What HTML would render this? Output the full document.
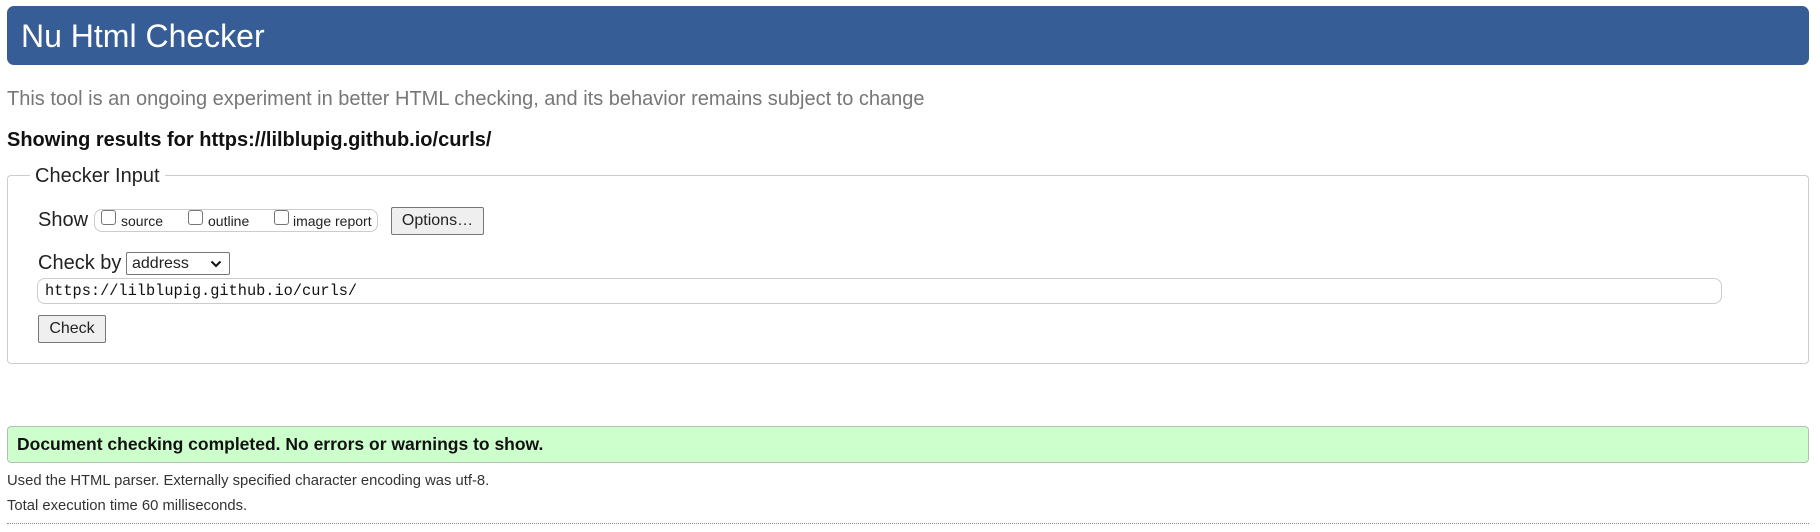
<!DOCTYPE html>
<html><head><meta charset="utf-8"><style>
*{box-sizing:border-box}
body{margin:0;width:1820px;height:532px;background:#fff;font-family:"Liberation Sans",Arial,sans-serif;color:#222;position:relative;overflow:hidden}
.a{position:absolute;white-space:nowrap}
#hd{left:7px;top:6px;width:1802px;height:59px;background:#365d95;border-radius:7px}
#hd span{position:absolute;left:14px;top:12px;font-size:32px;color:#fff;line-height:36px}
.fs{left:7px;top:175px;width:1802px;height:189px;border:1px solid #ccc;border-radius:4px}
.cb{display:inline-block;width:15px;height:15px;border:1px solid #767676;border-radius:3px;background:#fff}
.btn{background:#efefef;border:1px solid #767676;border-radius:2px;font-size:16px;text-align:center}
</style></head><body>
<div id="hd" class="a"><span>Nu Html Checker</span></div>
<div class="a" style="left:7px;top:87px;font-size:20px;color:#777;line-height:24px">This tool is an ongoing experiment in better HTML checking, and its behavior remains subject to change</div>
<div class="a" style="left:7px;top:128px;font-size:20px;font-weight:bold;color:#111;line-height:24px">Showing results for https://lilblupig.github.io/curls/</div>
<div class="a fs"></div>
<div class="a" style="left:30px;top:164px;background:#fff;padding:0 5px;font-size:20px;line-height:24px;color:#222">Checker Input</div>
<div class="a" style="left:38px;top:208px;font-size:20px;line-height:24px">Show</div>
<div class="a" style="left:94px;top:209px;width:284px;height:23px;border:1px solid #ccc;border-radius:8px"></div>
<div class="a cb" style="left:101px;top:210px"></div>
<div class="a" style="left:121px;top:213px;font-size:14px;line-height:17px">source</div>
<div class="a cb" style="left:188px;top:210px"></div>
<div class="a" style="left:208px;top:213px;font-size:14px;line-height:17px">outline</div>
<div class="a cb" style="left:274px;top:210px"></div>
<div class="a" style="left:293px;top:213px;font-size:14px;line-height:17px">image report</div>
<div class="a btn" style="left:391px;top:207px;width:93px;height:28px;line-height:26px">Options…</div>
<div class="a" style="left:38px;top:251px;font-size:20px;line-height:24px">Check by</div>
<div class="a" style="left:126px;top:252px;width:104px;height:23px;border:1px solid #767676;border-radius:2px;font-size:16px;line-height:21px;padding-left:5px">address
<svg style="position:absolute;right:7px;top:7px" width="12" height="8" viewBox="0 0 12 8"><path d="M1.5 1.5 L6 6 L10.5 1.5" stroke="#111" stroke-width="2" fill="none"/></svg></div>
<div class="a" style="left:37px;top:278px;width:1685px;height:26px;border:1px solid #ccc;border-radius:8px"></div>
<div class="a" style="left:45px;top:281px;font-family:'Liberation Mono','DejaVu Sans Mono',monospace;font-size:15.3px;line-height:20px;color:#111">https://lilblupig.github.io/curls/</div>
<div class="a btn" style="left:38px;top:315px;width:68px;height:28px;line-height:26px">Check</div>
<div class="a" style="left:7px;top:426px;width:1802px;height:37px;background:#ccffcc;border:1px solid #bbb;border-radius:4px"></div>
<div class="a" style="left:17px;top:434px;font-size:17.5px;font-weight:bold;line-height:21px;color:#111">Document checking completed. No errors or warnings to show.</div>
<div class="a" style="left:7px;top:473px;font-size:14.8px;line-height:17px;color:#333">Used the HTML parser. Externally specified character encoding was utf-8.</div>
<div class="a" style="left:7px;top:498px;font-size:14.8px;line-height:17px;color:#333">Total execution time 60 milliseconds.</div>
<div class="a" style="left:7px;top:523px;width:1802px;border-top:1px dotted #888"></div>
</body></html>
